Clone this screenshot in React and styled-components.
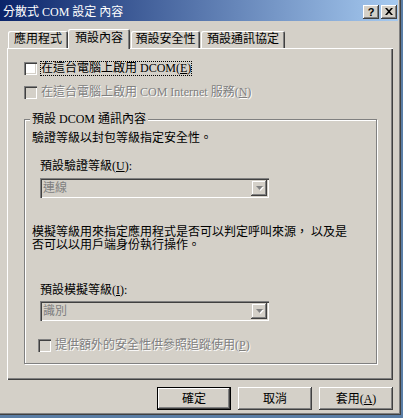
import React from 'react';
import styled, { createGlobalStyle } from 'styled-components';

const Global = createGlobalStyle`
  html, body { margin: 0; padding: 0; background: #5a7ea6; }
  body {
    width: 403px; height: 418px; overflow: hidden;
    font-family: "Liberation Serif", "Noto Sans CJK TC", serif;
    font-size: 12px;
    color: #000;
  }
`;

const Window = styled.div`
  width: 401px;
  height: 415px;
  box-sizing: border-box;
  background: #d4d0c8;
  padding: 0 3px 3px 0;
  box-shadow: inset -1px -1px #404040, inset -2px -2px #808080;
  display: flex;
  flex-direction: column;
`;

const TitleBar = styled.div`
  height: 21px;
  flex: none;
  display: flex;
  align-items: flex-start;
  padding: 0 1px 0 3px;
  background: linear-gradient(to right, #0a246a, #a6caf0);
`;

const TitleText = styled.div`
  margin-top: 5px;
  line-height: 14px;
  color: #fff;
  white-space: nowrap;
`;

const TitleButtons = styled.div`
  margin-left: auto;
  margin-top: 5px;
  display: flex;
  gap: 2px;
`;

const TitleButton = styled.div`
  width: 16px;
  height: 14px;
  box-sizing: border-box;
  background: #d4d0c8;
  box-shadow: inset -1px -1px #404040, inset 1px 1px #fff, inset -2px -2px #808080;
  display: flex;
  align-items: center;
  justify-content: center;
  font-family: "Liberation Sans", sans-serif;
  font-weight: bold;
  font-size: 11px;
  line-height: 14px;
  color: #000;
  padding-bottom: 1px;
`;

const Body = styled.div`
  padding: 8px 0 0 7px;
  display: flex;
  flex-direction: column;
`;

const TabRow = styled.div`
  display: flex;
  align-items: flex-end;
  height: 19px;
  padding-left: 1px;
  position: relative;
  z-index: 1;
`;

const Tab = styled.div`
  width: ${p => p.$w}px;
  margin-left: ${p => p.$ml || 0}px;
  box-sizing: border-box;
  height: ${p => (p.$active ? 20 : 17)}px;
  margin-bottom: ${p => (p.$active ? -1 : 0)}px;
  background: #d4d0c8;
  border-radius: 2px 2px 0 0;
  box-shadow: inset 1px 1px #fff, inset -1px 0 #404040, inset -2px 0 #808080;
  text-align: center;
  line-height: ${p => (p.$active ? 14 : 17)}px;
  padding-top: ${p => (p.$active ? 2 : 0)}px;
  white-space: nowrap;
`;

const Panel = styled.div`
  width: 386px;
  height: 332px;
  box-sizing: border-box;
  box-shadow: inset 1px 1px #fff, inset -1px -1px #404040, inset -2px -2px #808080;
  padding: 14px 0 0 17px;
  display: flex;
  flex-direction: column;
  align-items: flex-start;
`;

const CheckRow = styled.div`
  display: flex;
  align-items: center;
  height: 13px;
  margin-top: ${p => p.$mt || 0}px;
  margin-left: ${p => p.$ml || 0}px;
`;

const Box = styled.div`
  width: 13px;
  height: 13px;
  flex: none;
  box-sizing: border-box;
  background: ${p => (p.$disabled ? '#d4d0c8' : '#fff')};
  box-shadow: inset 1px 1px #808080, inset 2px 2px #404040, inset -1px -1px #fff, inset -2px -2px #d4d0c8;
`;

const CheckLabel = styled.span`
  margin-left: 3px;
  line-height: 13px;
  border: 1px ${p => (p.$focus ? 'dotted #000' : 'solid transparent')};
  white-space: nowrap;
  color: ${p => (p.$disabled ? '#808080' : '#000')};
  text-shadow: ${p => (p.$disabled ? '1px 1px #fff' : 'none')};
`;

const Group = styled.div`
  position: relative;
  margin-top: 20px;
  width: 353px;
  box-sizing: border-box;
  border: 1px solid #808080;
  box-shadow: inset 1px 1px #fff, 1px 1px #fff;
  padding: 0 0 11px 7px;
  display: flex;
  flex-direction: column;
  align-items: flex-start;
`;

const Legend = styled.div`
  position: absolute;
  top: -7px;
  left: 5px;
  padding: 0 2px;
  line-height: 13px;
  background: #d4d0c8;
  white-space: nowrap;
`;

const Text = styled.div`
  line-height: ${p => p.$lh || 12}px;
  margin-top: ${p => p.$mt || 0}px;
  padding-left: ${p => p.$pl || 0}px;
  white-space: nowrap;
`;

const Combo = styled.div`
  margin-top: ${p => p.$mt}px;
  margin-left: 8px;
  width: 229px;
  height: 20px;
  box-sizing: border-box;
  padding: 2px;
  background: #d4d0c8;
  box-shadow: inset 1px 1px #808080, inset 2px 2px #404040, inset -1px -1px #fff, inset -2px -2px #d4d0c8;
  display: flex;
  align-items: center;
`;

const ComboValue = styled.div`
  flex: 1;
  padding-left: 1px;
  line-height: 16px;
  color: #808080;
`;

const DropButton = styled.div`
  width: 16px;
  height: 16px;
  box-sizing: border-box;
  background: #d4d0c8;
  box-shadow: inset -1px -1px #404040, inset 1px 1px #d4d0c8, inset -2px -2px #808080, inset 2px 2px #fff;
  display: flex;
  align-items: center;
  justify-content: center;
`;

const ButtonRow = styled.div`
  width: 386px;
  margin-top: 7px;
  display: flex;
  justify-content: flex-end;
  gap: 7px;
`;

const Button = styled.div`
  width: 74px;
  height: 23px;
  box-sizing: border-box;
  background: #d4d0c8;
  border: ${p => (p.$default ? '1px solid #000' : 'none')};
  box-shadow: inset -1px -1px #404040, inset 1px 1px #fff, inset -2px -2px #808080;
  display: flex;
  align-items: center;
  justify-content: center;
  line-height: 14px;
  white-space: nowrap;
`;

const U = styled.span`
  text-decoration: underline;
`;

const Arrow = () => (
  <svg width="9" height="6" viewBox="0 0 9 6">
    <path d="M2 2h7l-3.5 4z" fill="#fff" />
    <path d="M1 1h7l-3.5 4z" fill="#808080" />
  </svg>
);

const CloseGlyph = () => (
  <svg width="8" height="7" viewBox="0 0 8 7">
    <path d="M0 0h2l2 2.2L6 0h2L5 3.5 8 7H6L4 4.8 2 7H0l3-3.5z" fill="#000" />
  </svg>
);

export default function App() {
  return (
    <>
      <Global />
      <Window>
        <TitleBar>
          <TitleText>分散式 COM 設定 內容</TitleText>
          <TitleButtons>
            <TitleButton>?</TitleButton>
            <TitleButton><CloseGlyph /></TitleButton>
          </TitleButtons>
        </TitleBar>
        <Body>
          <TabRow>
            <Tab $w={60}>應用程式</Tab>
            <Tab $w={62} $active>預設內容</Tab>
            <Tab $w={69} $ml={1}>預設安全性</Tab>
            <Tab $w={84} $ml={1}>預設通訊協定</Tab>
          </TabRow>
          <Panel>
            <CheckRow>
              <Box />
              <CheckLabel $focus>在這台電腦上啟用 DCOM(<U>E</U>)</CheckLabel>
            </CheckRow>
            <CheckRow $mt={11}>
              <Box $disabled />
              <CheckLabel $disabled>在這台電腦上啟用 COM Internet 服務(<U>N</U>)</CheckLabel>
            </CheckRow>
            <Group>
              <Legend>預設 DCOM 通訊內容</Legend>
              <Text $mt={12}>驗證等級以封包等級指定安全性。</Text>
              <Text $mt={16} $pl={8}>預設驗證等級(<U>U</U>):</Text>
              <Combo $mt={6}>
                <ComboValue>連線</ComboValue>
                <DropButton><Arrow /></DropButton>
              </Combo>
              <Text $mt={28} $lh={13}>
                模擬等級用來指定應用程式是否可以判定呼叫來源， 以及是<br />
                否可以以用戶端身份執行操作。
              </Text>
              <Text $mt={32} $pl={8}>預設模擬等級(<U>I</U>):</Text>
              <Combo $mt={5}>
                <ComboValue>識別</ComboValue>
                <DropButton><Arrow /></DropButton>
              </Combo>
              <CheckRow $mt={18} $ml={6}>
                <Box $disabled />
                <CheckLabel $disabled>提供額外的安全性供參照追蹤使用(<U>P</U>)</CheckLabel>
              </CheckRow>
            </Group>
          </Panel>
          <ButtonRow>
            <Button $default>確定</Button>
            <Button>取消</Button>
            <Button>套用(<U>A</U>)</Button>
          </ButtonRow>
        </Body>
      </Window>
    </>
  );
}
